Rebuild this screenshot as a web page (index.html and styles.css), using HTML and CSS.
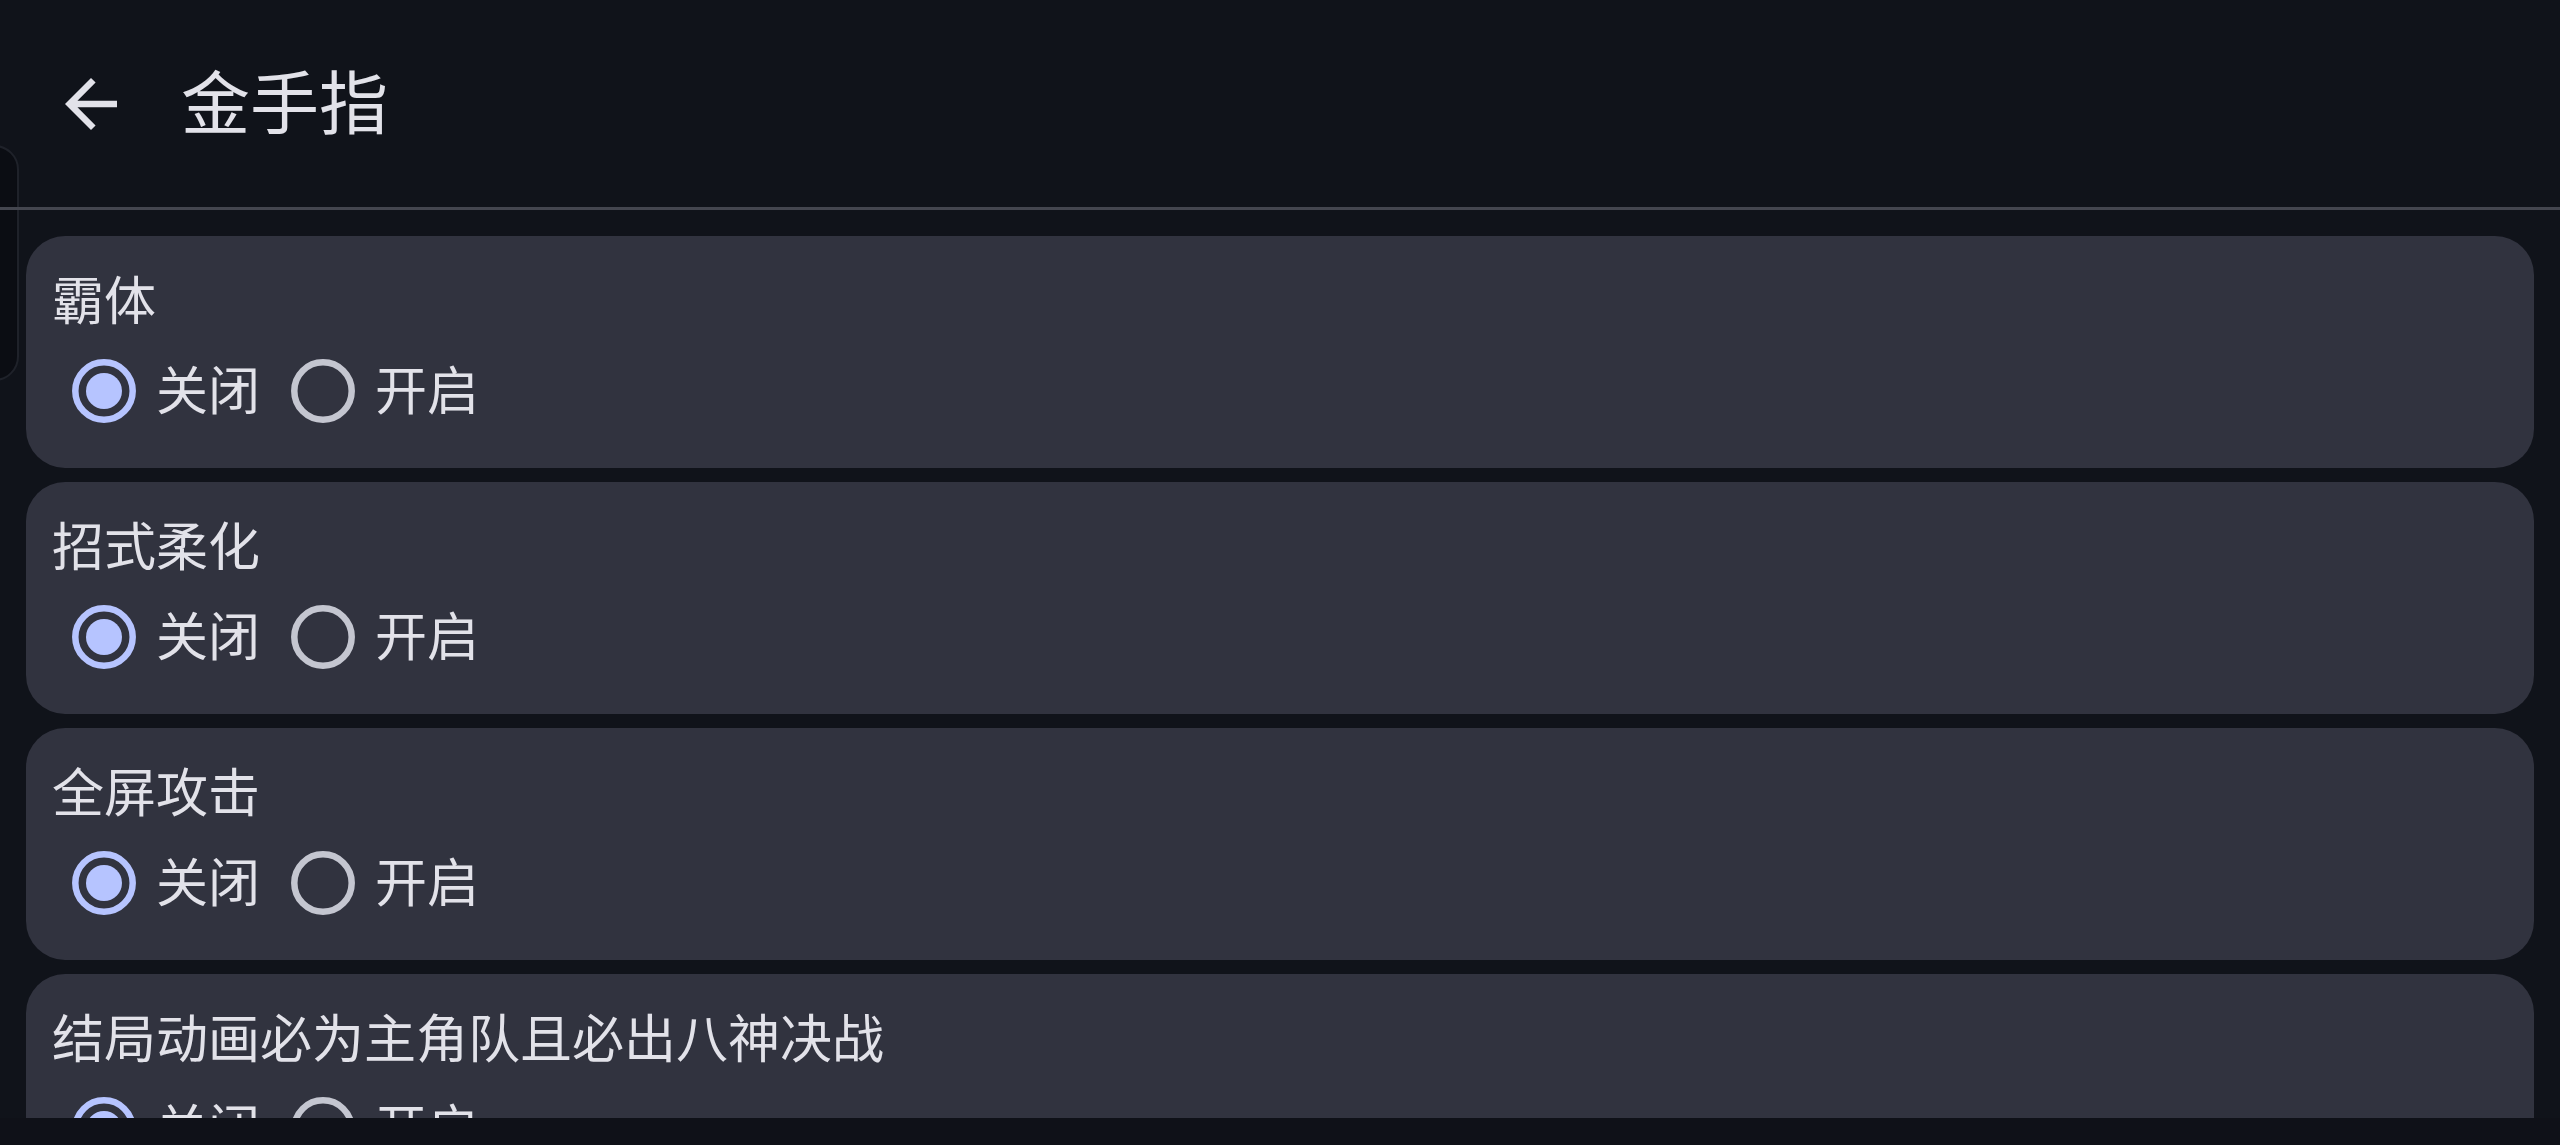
FILE: index.html
```html
<!DOCTYPE html>
<html lang="zh-CN">
<head>
<meta charset="utf-8">
<title>金手指</title>
<link rel="stylesheet" href="styles.css">
</head>
<body>
<div class="side-panel"></div>
<div class="app">
  <header class="topbar">
    <button class="nav-btn" aria-label="返回">
      <svg class="nav-icon" viewBox="0 0 24 24"><path d="M20 11H7.83l5.59-5.59L12 4l-8 8 8 8 1.41-1.41L7.83 13H20v-2z"/></svg>
    </button>
    <h1 class="title">金手指</h1>
  </header>
  <div class="divider"></div>
  <main class="list">
    <section class="card">
      <div class="label">霸体</div>
      <div class="options">
        <div class="option"><span class="radio on"><svg viewBox="0 0 64 64"><circle class="ring" cx="32" cy="32" r="28.7"/><circle class="dot" cx="32" cy="32" r="18"/></svg></span><span class="opt-text">关闭</span></div>
        <div class="option"><span class="radio"><svg viewBox="0 0 64 64"><circle class="ring" cx="32" cy="32" r="28.7"/></svg></span><span class="opt-text">开启</span></div>
      </div>
    </section>
    <section class="card">
      <div class="label">招式柔化</div>
      <div class="options">
        <div class="option"><span class="radio on"><svg viewBox="0 0 64 64"><circle class="ring" cx="32" cy="32" r="28.7"/><circle class="dot" cx="32" cy="32" r="18"/></svg></span><span class="opt-text">关闭</span></div>
        <div class="option"><span class="radio"><svg viewBox="0 0 64 64"><circle class="ring" cx="32" cy="32" r="28.7"/></svg></span><span class="opt-text">开启</span></div>
      </div>
    </section>
    <section class="card">
      <div class="label">全屏攻击</div>
      <div class="options">
        <div class="option"><span class="radio on"><svg viewBox="0 0 64 64"><circle class="ring" cx="32" cy="32" r="28.7"/><circle class="dot" cx="32" cy="32" r="18"/></svg></span><span class="opt-text">关闭</span></div>
        <div class="option"><span class="radio"><svg viewBox="0 0 64 64"><circle class="ring" cx="32" cy="32" r="28.7"/></svg></span><span class="opt-text">开启</span></div>
      </div>
    </section>
    <section class="card">
      <div class="label">结局动画必为主角队且必出八神决战</div>
      <div class="options">
        <div class="option"><span class="radio on"><svg viewBox="0 0 64 64"><circle class="ring" cx="32" cy="32" r="28.7"/><circle class="dot" cx="32" cy="32" r="18"/></svg></span><span class="opt-text">关闭</span></div>
        <div class="option"><span class="radio"><svg viewBox="0 0 64 64"><circle class="ring" cx="32" cy="32" r="28.7"/></svg></span><span class="opt-text">开启</span></div>
      </div>
    </section>
  </main>
  <div class="bottom-gap"></div>
</div>
</body>
</html>
```

FILE: styles.css
```css
* { box-sizing: border-box; }

html, body {
  margin: 0;
  padding: 0;
  width: 2560px;
  height: 1145px;
  overflow: hidden;
  background: #10131a;
  color: #e2e2e9;
  font-family: "Noto Sans CJK SC", "Noto Sans", sans-serif;
}

.app {
  display: flex;
  flex-direction: column;
  height: 1145px;
}

.side-panel {
  position: absolute;
  left: -30px;
  top: 145px;
  width: 49px;
  height: 236px;
  border: 2px solid #1f222a;
  border-radius: 32px;
  background: #0b0d13;
}

.topbar {
  height: 207px;
  display: flex;
  align-items: center;
  flex-shrink: 0;
}

.nav-btn {
  width: 156px;
  height: 156px;
  margin-left: 13px;
  padding: 0;
  border: 0;
  background: transparent;
  display: flex;
  align-items: center;
  justify-content: center;
}

.nav-icon {
  width: 78px;
  height: 78px;
  fill: #e2e2e9;
}

.title {
  margin: 0 0 0 12px;
  padding-bottom: 8px;
  font-size: 69px;
  font-weight: 400;
  line-height: 91px;
  color: #e2e2e9;
}

.divider {
  position: relative;
  height: 3px;
  background: #44464f;
  flex-shrink: 0;
}

.list {
  flex: 1;
  overflow: hidden;
  padding: 26px 26px 0 26px;
  display: flex;
  flex-direction: column;
  gap: 14px;
}

.card {
  flex-shrink: 0;
  background: #31333f;
  border-radius: 39px;
  padding: 26px;
  height: 232px;
}

.label {
  font-size: 52px;
  line-height: 72px;
  padding-bottom: 6px;
  white-space: nowrap;
}

.options {
  display: flex;
  align-items: center;
  height: 102px;
  gap: 11px;
}

.option {
  display: flex;
  align-items: center;
}

.radio {
  width: 104px;
  height: 102px;
  display: flex;
  align-items: center;
  justify-content: center;
}

.radio svg {
  width: 64px;
  height: 64px;
}

.radio .ring {
  fill: none;
  stroke: #c4c6d0;
  stroke-width: 6.5;
}

.radio.on .ring {
  stroke: #b6c4ff;
}

.radio .dot {
  fill: #b6c4ff;
}

.opt-text {
  font-size: 52px;
  line-height: 72px;
  padding-bottom: 6px;
  width: 104px;
  white-space: nowrap;
}

.bottom-gap {
  height: 27px;
  flex-shrink: 0;
  background: #0f1118;
}
```
